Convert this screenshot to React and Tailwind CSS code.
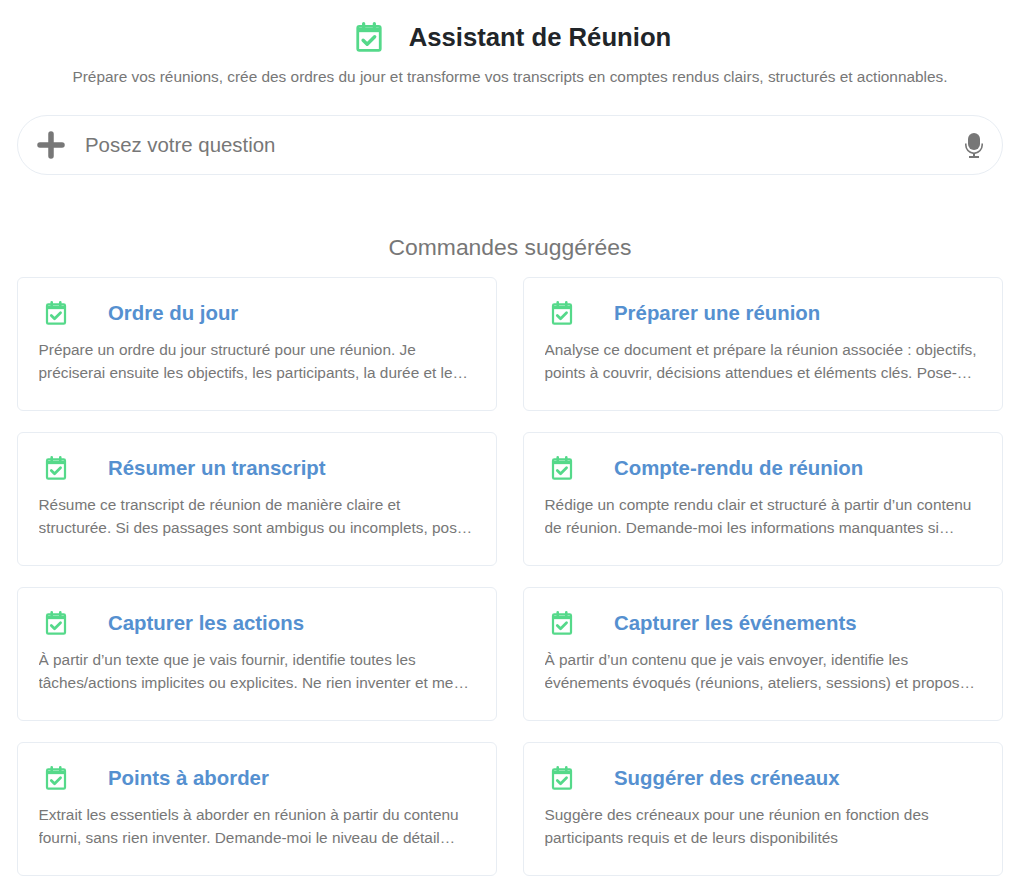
const commands = [
  {
    title: "Ordre du jour",
    text: "Prépare un ordre du jour structuré pour une réunion. Je préciserai ensuite les objectifs, les participants, la durée et le contexte de la réunion à préparer.",
  },
  {
    title: "Préparer une réunion",
    text: "Analyse ce document et prépare la réunion associée : objectifs, points à couvrir, décisions attendues et éléments clés. Pose-moi des questions si nécessaire pour compléter.",
  },
  {
    title: "Résumer un transcript",
    text: "Résume ce transcript de réunion de manière claire et structurée. Si des passages sont ambigus ou incomplets, pose-moi des questions avant de conclure le résumé.",
  },
  {
    title: "Compte-rendu de réunion",
    text: "Rédige un compte rendu clair et structuré à partir d’un contenu de réunion. Demande-moi les informations manquantes si nécessaire avant de rédiger le document final.",
  },
  {
    title: "Capturer les actions",
    text: "À partir d’un texte que je vais fournir, identifie toutes les tâches/actions implicites ou explicites. Ne rien inventer et me demander de préciser les responsables.",
  },
  {
    title: "Capturer les événements",
    text: "À partir d’un contenu que je vais envoyer, identifie les événements évoqués (réunions, ateliers, sessions) et propose-moi de les ajouter à mon agenda.",
  },
  {
    title: "Points à aborder",
    text: "Extrait les essentiels à aborder en réunion à partir du contenu fourni, sans rien inventer. Demande-moi le niveau de détail souhaité avant de commencer la synthèse.",
  },
  {
    title: "Suggérer des créneaux",
    text: "Suggère des créneaux pour une réunion en fonction des participants requis et de leurs disponibilités",
  },
];

const CalendarCheck = ({ className }) => (
  <svg viewBox="0 0 24 28" fill="none" className={className}>
    <path d="M7 1.5v4M17 1.5v4" stroke="#55d98a" strokeWidth="3" strokeLinecap="round" />
    <rect x="1.5" y="4" width="21" height="22.5" rx="1.5" stroke="#55d98a" strokeWidth="2.6" />
    <path d="M1.5 5.5h21v4h-21z" fill="#55d98a" />
    <path d="M6.5 17l3.8 3.8 7-7" stroke="#55d98a" strokeWidth="3.2" strokeLinecap="round" strokeLinejoin="round" />
  </svg>
);

const CommandCard = ({ title, text }) => (
  <div className="h-[134.4px] rounded-md border border-[#e8edf3] bg-white pt-[21px] pr-[21px] pl-[20.5px]">
    <div className="flex h-[28px] items-center">
      <CalendarCheck className="ml-[6.5px] h-[24px] w-[22px] shrink-0" />
      <h3 className="ml-[41px] text-[20.4px] leading-[28px] font-bold text-[#5590d0]">{title}</h3>
    </div>
    <p className="mt-[11px] line-clamp-2 text-[15.4px] leading-[23px] text-[#777777]">{text}</p>
  </div>
);

export default function App() {
  return (
    <div className="min-h-[894px] bg-white pr-[21px] pl-[17px] font-['Liberation_Sans',Arial,sans-serif]">
      <header className="flex flex-col items-center pt-[21px]">
        <div className="flex h-[32px] items-center pl-[7px]">
          <CalendarCheck className="h-[30px] w-[26px]" />
          <h1 className="ml-[27px] text-[25.7px] leading-[32px] font-bold text-[#212529]">Assistant de Réunion</h1>
        </div>
        <p className="mt-[14px] text-[15.4px] leading-[20px] text-[#777777]">
          Prépare vos réunions, crée des ordres du jour et transforme vos transcripts en comptes rendus clairs, structurés et actionnables.
        </p>
      </header>

      <div className="mt-[28px] flex h-[60px] items-center rounded-[30px] border border-[#e8edf3] bg-white pr-[19px] pl-[19px]">
        <svg viewBox="0 0 28 28" className="h-[28px] w-[28px] shrink-0" fill="none">
          <path d="M14 3v22M3 14h22" stroke="#777777" strokeWidth="5.5" strokeLinecap="round" />
        </svg>
        <span className="ml-[20px] flex-1 text-[20.4px] text-[#777777]">Posez votre question</span>
        <svg viewBox="0 0 18 25" className="h-[25px] w-[18px] shrink-0" fill="#777777">
          <rect x="3" y="0" width="12" height="17" rx="6" />
          <path d="M0 10.5h1.6V12a7.4 7.4 0 0 0 14.8 0v-1.5H18V12a9 9 0 0 1-8 8.9V23h4v2H4v-2h4v-2.1A9 9 0 0 1 0 12z" />
        </svg>
      </div>

      <h2 className="mt-[58px] text-center text-[22.9px] leading-[28px] font-normal text-[#777777]">Commandes suggérées</h2>

      <div className="mt-[16px] grid grid-cols-2 gap-x-[26px] gap-y-[20.6px]">
        {commands.map((c) => (
          <CommandCard key={c.title} title={c.title} text={c.text} />
        ))}
      </div>
    </div>
  );
}
